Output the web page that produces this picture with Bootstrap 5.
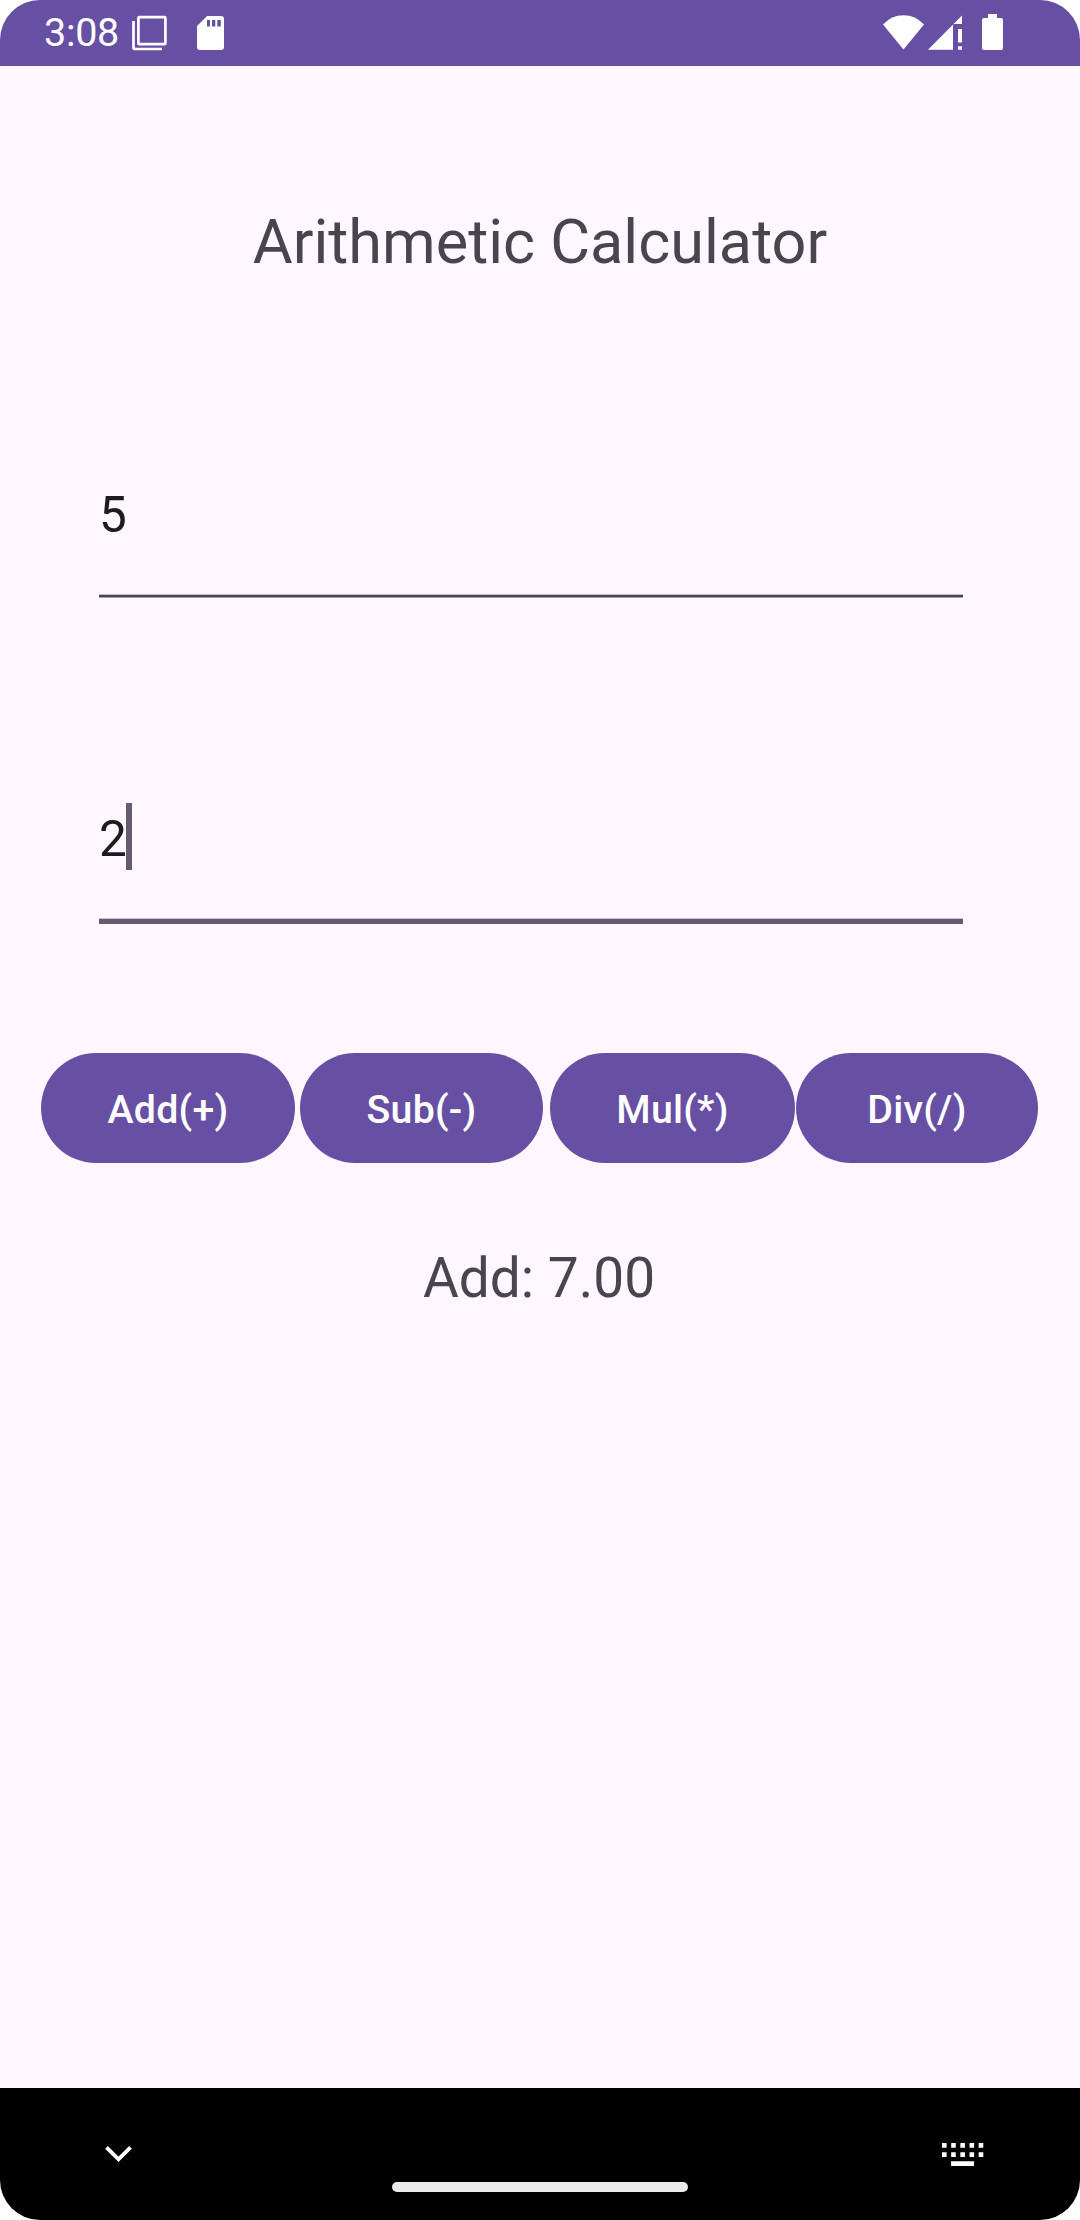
<!DOCTYPE html>
<html lang="en">
<head>
<meta charset="utf-8">
<meta name="viewport" content="width=device-width, initial-scale=1">
<title>Arithmetic Calculator</title>
<link href="https://cdn.jsdelivr.net/npm/bootstrap@5.3.0/dist/css/bootstrap.min.css" rel="stylesheet">
<style>
  :root { --purple: #6750a4; --surface: #fef7ff; --muted: #49454f; --accent: #625b71; }
  body { background: #fff; font-family: Roboto, sans-serif; }
  .screen { width: 1080px; height: 2220px; border-radius: 40px; background: var(--surface); }
  .status { height: 66px; background: var(--purple); padding-left: 44px; padding-right: 76px; }
  .clock { font-size: 39.5px; line-height: 66px; width: 87px; letter-spacing: -.3px; }
  .title { margin-top: 136px; font-size: 61.2px; line-height: 80px; color: var(--muted); font-weight: 400; }
  .field { margin-left: 99px; width: 864px; font-size: 49.5px; line-height: 68px; color: #1d1b20; letter-spacing: .03125em; }
  .field-one { margin-top: 199px; height: 117px; }
  .field-two { margin-top: 205px; height: 121px; line-height: 72px; }
  .rule { height: 4px; background: linear-gradient(#c3bec7 1px, var(--muted) 1px 3px, #a8a3ad 3px); }
  .rule-focus { height: 6px; background: linear-gradient(#c9c2d1 1px, var(--accent) 1px); }
  .caret { width: 6px; height: 67px; margin-left: -2px; background: var(--accent); }
  .keys { margin-top: 129px; padding-left: 41px; }
  .op { --bs-btn-bg: var(--purple); --bs-btn-color: #fff; --bs-btn-border-width: 0; --bs-btn-padding-x: 0; --bs-btn-padding-y: 0;
        height: 110px; padding-top: 4px; font-size: 39.3px; font-weight: 500; line-height: 60px; letter-spacing: .006em; }
  .op-add { width: 254px; margin-right: 5px; }
  .op-sub { width: 243px; margin-right: 7px; }
  .op-mul { width: 245px; margin-right: 1px; }
  .op-div { width: 242px; }
  .result { margin-top: 75px; padding-right: 2px; font-size: 55px; line-height: 80px; color: var(--muted); }
  .navarea { height: 132px; padding: 55px 94px 28px 103px; }
  .home { width: 296px; height: 10px; background: #ebebeb; margin-left: 289px; }
</style>
</head>
<body>
<div class="screen d-flex flex-column overflow-hidden">
  <header class="status d-flex justify-content-between text-white">
    <div class="d-flex">
      <span class="clock">3:08</span>
      <svg width="100" height="66" viewBox="131 0 100 66" fill="#fff">
        <rect x="138.400" y="17.200" width="27" height="27" rx="1" fill="none" stroke="#fff" stroke-width="2.700"/>
        <path d="M133.500 21v26.500q0 1.500 1.500 1.500h27" fill="none" stroke="#fff" stroke-width="2.700"/>
        <path fill-rule="evenodd" d="M207 16h14q3 0 3 3v28q0 3-3 3h-21q-3 0-3-3V26zM207 20v6.500h3V20zM212 20v6.500h3.300V20zM217.300 20v6.500h3.500V20z"/>
      </svg>
    </div>
    <svg width="124" height="66" viewBox="880 0 124 66" fill="#fff">
      <path d="M883 24.500Q891.500 15.300 903.500 15.300T924 24.500L903.500 49.500z"/>
      <path d="M928 49.700L962 15.500V24H953V49.700zM958 29h4v13.500h-4zM958 46.200h4v3.500h-4z"/>
      <path d="M988 14h9v4h4q2 0 2 2v28q0 2-2 2h-17q-2 0-2-2V20q0-2 2-2h4z"/>
    </svg>
  </header>

  <main class="flex-grow-1">
    <h1 class="title text-center mb-0">Arithmetic Calculator</h1>
    <div class="field field-one d-flex flex-column justify-content-between"><span>5</span><div class="rule"></div></div>
    <div class="field field-two d-flex flex-column justify-content-between">
      <div class="d-flex"><span>2</span><span class="caret"></span></div>
      <div class="rule-focus"></div>
    </div>
    <div class="keys d-flex">
      <button type="button" class="btn op op-add rounded-pill">Add(+)</button>
      <button type="button" class="btn op op-sub rounded-pill">Sub(-)</button>
      <button type="button" class="btn op op-mul rounded-pill">Mul(*)</button>
      <button type="button" class="btn op op-div rounded-pill">Div(/)</button>
    </div>
    <p class="result text-center mb-0">Add: 7.00</p>
  </main>

  <footer class="navarea bg-black d-flex flex-column justify-content-between">
    <div class="d-flex justify-content-between">
      <svg width="31" height="25" viewBox="103 2143 31 25"><path d="M106.500 2147.300l12 12 12-12" fill="none" stroke="#fff" stroke-width="3.900"/></svg>
      <svg width="45" height="25" viewBox="941 2143 45 25" fill="#fff">
        <path d="M942 2143h4.600v4.700h-4.600zm9.170 0h4.600v4.700h-4.600zm9.170 0h4.600v4.700h-4.600zm9.170 0h4.600v4.700h-4.600zm9.170 0h4.600v4.700h-4.600zM942 2152.200h4.600v4.700h-4.600zm9.170 0h4.600v4.700h-4.600zm9.170 0h4.600v4.700h-4.600zm9.170 0h4.600v4.700h-4.600zm9.170 0h4.600v4.700h-4.600zM951 2161.300h23v4.700h-23z"/>
      </svg>
    </div>
    <div class="home rounded-pill"></div>
  </footer>
</div>
<script src="https://cdn.jsdelivr.net/npm/bootstrap@5.3.0/dist/js/bootstrap.bundle.min.js"></script>
</body>
</html>
